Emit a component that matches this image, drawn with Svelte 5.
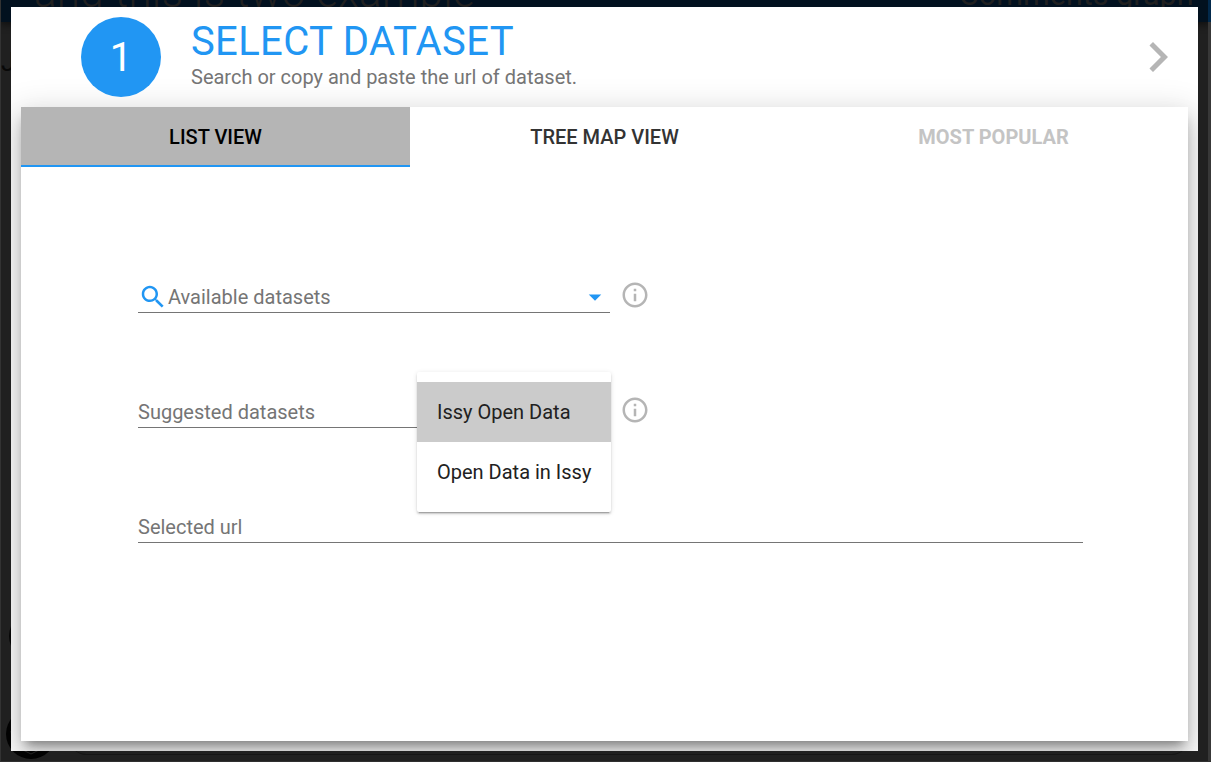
<script>
  const tabs = [
    { label: 'List view', state: 'active' },
    { label: 'Tree map view', state: '' },
    { label: 'Most popular', state: 'disabled' }
  ];
  const options = ['Issy Open Data', 'Open Data in Issy'];
  let selected = $state(0);
</script>

{#snippet info()}
  <svg class="info" viewBox="0 0 24 24"><path d="M11 17h2v-6h-2v6zm1-15C6.48 2 2 6.48 2 12s4.48 10 10 10 10-4.48 10-10S17.52 2 12 2zm0 18c-4.41 0-8-3.59-8-8s3.59-8 8-8 8 3.59 8 8-3.590 8-8 8zM11 9h2V7h-2v2z" /></svg>
{/snippet}

<div class="page">
  <div class="toolbar">
    <span class="room">and this is two example</span>
    <span class="graph">Comments graph</span>
  </div>
  <span class="letter">J</span>
  <span class="avatar small"></span>
  <svg class="avatar large" viewBox="0 0 50 50"><circle cx="25" cy="25" r="25" /><path d="M5 22Q6 34 15 42M9 37l16 8 16-8" /></svg>
  <span class="comment"></span>
  <span class="scrollbar"></span>

  <div class="dialog">
    <header>
      <div class="step">1</div>
      <div class="heading">
        <h1>SELECT DATASET</h1>
        <p>Search or copy and paste the url of dataset.</p>
      </div>
      <svg class="next" viewBox="0 0 24 24"><path d="M10 6L8.59 7.41 13.17 12l-4.58 4.59L10 18l6-6z" /></svg>
    </header>

    <section class="card">
      <nav>
        {#each tabs as tab}
          <div class="tab {tab.state}">{tab.label}</div>
        {/each}
      </nav>
      <div class="fields">
        <div class="row">
          <div class="field">
            <svg class="search" viewBox="0 0 24 24"><path d="M15.5 14h-.79l-.28-.27C15.41 12.59 16 11.11 16 9.5 16 5.91 13.09 3 9.5 3S3 5.91 3 9.5 5.91 16 9.5 16c1.610 0 3.090-.59 4.230-1.570l.27.28v.79l5 4.990L20.490 19l-4.990-5zm-6 0C7.010 14 5 11.990 5 9.500S7.010 5 9.500 5 14 7.010 14 9.500 11.990 14 9.500 14z" /></svg>
            <span>Available datasets</span>
            <svg class="caret" viewBox="0 0 24 24"><path d="M7 10l5 5 5-5z" /></svg>
          </div>
          {@render info()}
        </div>
        <div class="row">
          <div class="field">
            <span>Suggested datasets</span>
            <div class="menu">
              {#each options as option, i}
                <button class:selected={selected === i} onclick={() => (selected = i)}>{option}</button>
              {/each}
            </div>
          </div>
          {@render info()}
        </div>
        <div class="row">
          <div class="field wide"><span>Selected url</span></div>
        </div>
      </div>
    </section>
  </div>
</div>

<style>
  :global(body) {
    margin: 0;
    overflow: hidden;
  }
  .page {
    position: relative;
    box-sizing: border-box;
    height: 762px;
    padding: 7px 13px 11px 11px;
    overflow: hidden;
    background: #202020;
    font: 20px/25px Roboto, sans-serif;
  }
  .page::before {
    content: '';
    position: absolute;
    z-index: 1;
    inset: 0;
    border-left: 1px solid #333;
    border-bottom: 1px solid #303030;
  }
  .toolbar {
    position: absolute;
    inset: 0 0 auto;
    height: 22px;
    background: #02111f;
    box-shadow: 0 2px 8px rgba(0, 0, 0, 0.6);
    color: #202020;
    white-space: nowrap;
  }
  .room,
  .graph {
    position: absolute;
    line-height: 50px;
  }
  .room {
    left: 34px;
    top: -32px;
    font-size: 42px;
    font-weight: 300;
    letter-spacing: 0.35px;
  }
  .graph {
    left: 959px;
    top: -30px;
    font-size: 30.5px;
  }
  .letter {
    position: absolute;
    left: 1px;
    top: 50px;
    font-size: 26px;
    color: #080808;
  }
  .avatar {
    position: absolute;
  }
  .small {
    left: 9px;
    top: 611px;
    width: 50px;
    height: 50px;
    border-radius: 50%;
    background: #050505;
  }
  .large {
    left: 6px;
    top: 709px;
    width: 50px;
    height: 50px;
    fill: #020202;
    stroke: #242424;
    stroke-width: 1;
  }
  .large circle {
    stroke: none;
  }
  .comment {
    position: absolute;
    left: 70px;
    top: 660px;
    width: 1118px;
    height: 94px;
    border-bottom: 1px solid #151515;
    border-radius: 16px;
  }
  .scrollbar {
    position: absolute;
    right: 0;
    top: 0;
    width: 3px;
    height: 762px;
    background: linear-gradient(#02294b 22px, #383838 22px);
  }
  .dialog {
    position: relative;
    z-index: 2;
    box-sizing: border-box;
    height: 744px;
    padding: 0 10px 10px;
    overflow: hidden;
    background: #fff;
  }
  header {
    display: flex;
    align-items: center;
    height: 100px;
    padding: 0 0 0 60px;
  }
  .step {
    width: 80px;
    height: 80px;
    border-radius: 50%;
    background: #2196f3;
    color: #fff;
    font-size: 40px;
    line-height: 81px;
    text-align: center;
  }
  .heading {
    flex: 1;
    margin-left: 30px;
    padding-bottom: 6px;
  }
  h1 {
    margin: 0;
    color: #2196f3;
    font-size: 40px;
    font-weight: 400;
    letter-spacing: 0.36px;
    line-height: 46px;
  }
  p {
    margin: 0;
    color: #757575;
  }
  .next {
    width: 60px;
    height: 60px;
    fill: #b5b5b5;
  }
  .card {
    height: 634px;
    background: #fff;
    box-shadow:
      0 16px 24px 2px rgba(0, 0, 0, 0.14),
      0 6px 30px 5px rgba(0, 0, 0, 0.12),
      0 8px 10px -5px rgba(0, 0, 0, 0.4);
  }
  nav {
    display: grid;
    grid-template-columns: repeat(3, 1fr);
    height: 60px;
  }
  .tab {
    box-sizing: border-box;
    padding-top: 18px;
    color: #333;
    font-weight: 500;
    text-align: center;
    text-transform: uppercase;
  }
  .active {
    border-bottom: 2px solid #2196f3;
    background: #b5b5b5;
    color: #000;
  }
  .disabled {
    color: #c4c4c4;
    font-weight: 700;
  }
  .fields {
    display: flex;
    flex-direction: column;
    gap: 84px;
    padding: 115px 105px 0 117px;
  }
  .row {
    display: flex;
    gap: 10px;
    height: 31px;
  }
  .field {
    position: relative;
    display: flex;
    box-sizing: border-box;
    align-items: flex-start;
    width: 472px;
    padding-top: 3px;
    border-bottom: 1px solid #757575;
    color: #757575;
  }
  .wide {
    width: 945px;
  }
  svg {
    display: block;
    flex: none;
  }
  .search,
  .caret,
  .info {
    width: 30px;
    height: 30px;
  }
  .search,
  .caret {
    margin-top: -3px;
    fill: #2196f3;
  }
  .caret {
    margin-left: auto;
  }
  .info {
    margin-top: -2px;
    fill: #b5b5b5;
  }
  .menu {
    position: absolute;
    z-index: 3;
    left: 279px;
    top: -25px;
    box-sizing: border-box;
    width: 194px;
    height: 140px;
    padding: 10px 0;
    border-radius: 2px;
    background: #fff;
    box-shadow:
      0 2px 2px rgba(0, 0, 0, 0.14),
      0 1px 5px rgba(0, 0, 0, 0.12),
      0 3px 1px -2px rgba(0, 0, 0, 0.2);
  }
  button {
    display: block;
    width: 100%;
    height: 60px;
    padding: 0 20px;
    border: 0;
    background: #fff;
    color: #212121;
    font: inherit;
    text-align: left;
    white-space: nowrap;
  }
  .selected {
    background: #cbcbcb;
  }
</style>
